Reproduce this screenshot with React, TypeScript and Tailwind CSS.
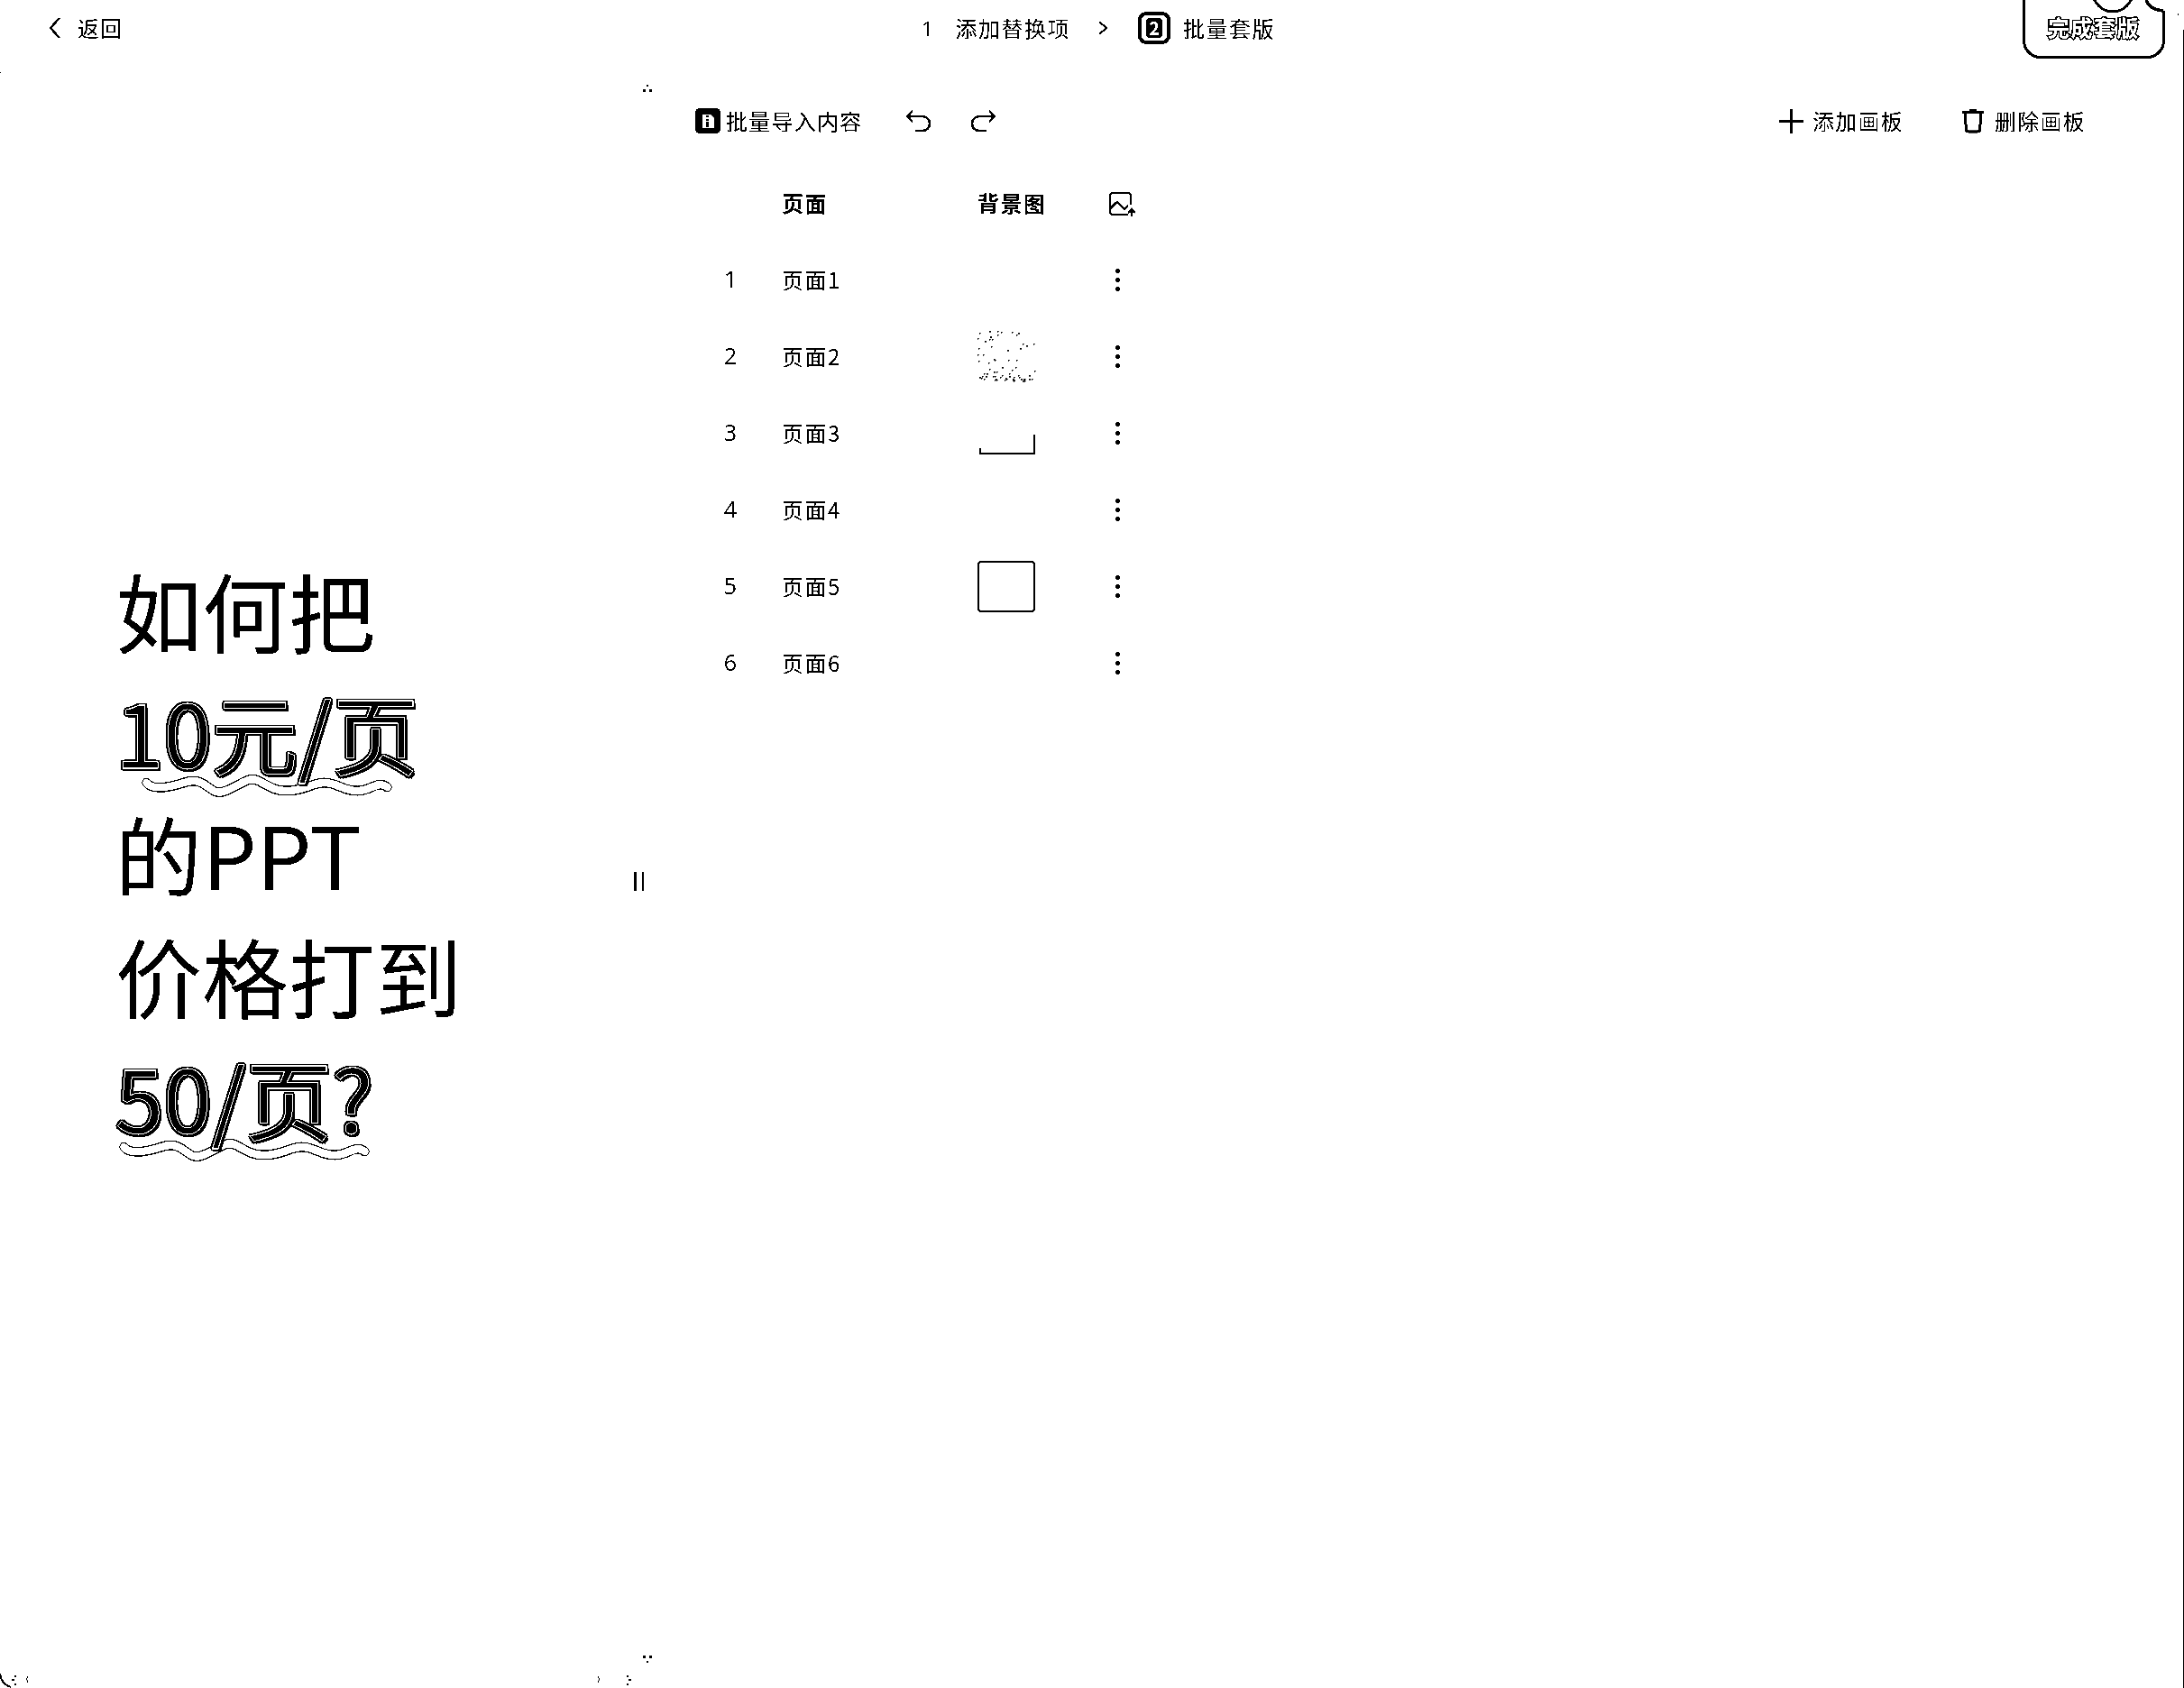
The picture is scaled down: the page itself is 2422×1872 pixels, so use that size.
import React from 'react'

const pages = [1, 2, 3, 4, 5, 6]

// scattered dots of the second page's background thumbnail
const speckles: [number, number][] = []
let seed = 17
for (let i = 0; i < 70; i++) {
  seed = (seed * 137 + 59) % 1009
  const x = seed % 64
  seed = (seed * 137 + 59) % 1009
  const y = i % 3 === 0 ? 50 + (seed % 6) : seed % 56
  speckles.push([x, y])
}

const WAVE =
  'M7 9 C14 17 32 15 52 9 S76 12 88 18 S116 10 130 6 S152 18 175 18 S204 10 220 9 S244 19 262 18 S284 6 297 14'

const Wave = ({ className }: { className: string }) => (
  <svg className={className} width="280" height="30" viewBox="0 0 304 30" preserveAspectRatio="none" fill="none">
    <path d={WAVE} stroke="#000" strokeWidth="11" strokeLinecap="round" />
    <path d={WAVE} stroke="#fff" strokeWidth="8.5" strokeLinecap="round" />
  </svg>
)

const Loud = ({ children }: { children: React.ReactNode }) => (
  <span className="relative z-10 text-black [-webkit-text-stroke:0.9px_#fff] [text-shadow:2.5px_0_0_#000,-2.5px_0_0_#000,0_2.5px_0_#000,0_-2.5px_0_#000,2px_2px_0_#000,-2px_-2px_0_#000,2px_-2px_0_#000,-2px_2px_0_#000,3px_3px_0_#000]">
    {children}
  </span>
)

const Kebab = () => (
  <div className="ml-[8px] flex w-[5px] flex-col gap-[5px]">
    <span className="h-[5px] w-[5px] rounded-full bg-black" />
    <span className="h-[5px] w-[5px] rounded-full bg-black" />
    <span className="h-[5px] w-[5px] rounded-full bg-black" />
  </div>
)

const Thumb = ({ page }: { page: number }) => {
  if (page === 2) {
    return (
      <svg width="66" height="57" viewBox="0 0 66 57">
        {speckles.map(([x, y], i) => (
          <rect key={i} x={x} y={y} width={i % 4 === 0 ? 2 : 1.5} height="1.5" fill="#000" />
        ))}
      </svg>
    )
  }
  if (page === 3) {
    return (
      <svg width="66" height="57" viewBox="0 0 66 57" className="mt-[60px]" fill="none" stroke="#000">
        <path d="M3 15v6h60" strokeWidth="1.6" />
        <path d="M63 22V0" strokeWidth="1.6" />
      </svg>
    )
  }
  if (page === 5) {
    return <div className="h-[57px] w-[64px] rounded-[4px] border-2 border-black" />
  }
  return null
}

export default function App() {
  return (
    <div className="relative h-[1872px] w-[2422px] overflow-hidden bg-white font-['Noto_Sans_CJK_SC','Noto_Sans',sans-serif] text-[24px] text-black contrast-[100]">
      <header className="flex h-[62px] items-center pl-[54px]">
        <div className="flex items-center">
          <svg width="13" height="24" viewBox="0 0 13 24" fill="none" stroke="#000" strokeWidth="2.4">
            <path d="M12 1 2 12l10 11" />
          </svg>
          <span className="ml-[19px] tracking-[1px]">返回</span>
        </div>

        <div className="ml-[886px] flex items-center">
          <span className="font-['Open_Sans',sans-serif] text-[22px]">1</span>
          <span className="ml-[25px] tracking-[1.5px]">添加替换项</span>
          <svg className="ml-[30px]" width="13" height="16" viewBox="0 0 13 16" fill="none" stroke="#000" strokeWidth="2">
            <path d="m2 1 8 7-8 7" />
          </svg>
          <div className="ml-[32px] flex h-[36px] w-[36px] items-center justify-center rounded-[9px] border-[4px] border-black">
            <span className="flex h-[22px] w-[18px] items-center justify-center rounded-[4px] bg-black text-[20px] leading-none font-bold text-white">
              2
            </span>
          </div>
          <span className="ml-[14px] tracking-[1.5px]">批量套版</span>
        </div>

        <button className="relative mr-[21px] -mt-[20px] ml-auto flex h-[85px] w-[158px] items-end justify-center self-start rounded-b-[20px] border-[3.5px] border-t-0 border-black pb-[14px]">
          <span className="font-bold tracking-[1.5px] text-white [-webkit-text-stroke:3px_#000] [paint-order:stroke_fill]">
            完成套版
          </span>
          <svg className="absolute -right-[5px] top-0 overflow-visible" width="75" height="40" viewBox="0 0 75 40" fill="none">
            <path d="M52 0h23v32H68Q56 31 52 20Z" fill="#fff" />
            <path d="M52 20Q56 31 71 32" stroke="#000" strokeWidth="3.5" />
            <circle cx="15" cy="11" r="22" stroke="#000" strokeWidth="3" />
          </svg>
        </button>
      </header>

      <main className="flex">
        <section className="w-[717px] pt-[546px] pl-[128px] text-[96px] leading-[135px]">
          <div>如何把</div>
          <div className="relative">
            <Wave className="absolute left-[28px] top-[116px]" />
            <Loud>10元/页</Loud>
          </div>
          <div>的PPT</div>
          <div>价格打到</div>
          <div className="relative">
            <Wave className="absolute left-[3px] top-[115px]" />
            <Loud>50/页?</Loud>
          </div>
        </section>

        <section className="flex-1 pt-[42px] pl-[54px] pr-[109px]">
          <div className="flex h-[60px] items-center">
            <svg width="28" height="28" viewBox="0 0 28 28">
              <rect width="28" height="28" rx="5" fill="#000" />
              <path d="M8 7h9l4 4v11H8z" fill="#fff" />
              <path d="M12 8h3v2h-3zm0 4h3v2h-3zm0 3h3v6h-3z" fill="#000" />
            </svg>
            <span className="ml-[6px] tracking-[1.25px]">批量导入内容</span>
            <svg className="ml-[47px]" width="28" height="25" viewBox="0 0 28 25" fill="none" stroke="#000" strokeWidth="2.6">
              <path d="M8 1 2 7l6 6M2 7h17a8 8 0 0 1 0 16h-8" />
            </svg>
            <svg className="ml-[45px]" width="28" height="25" viewBox="0 0 28 25" fill="none" stroke="#000" strokeWidth="2.6">
              <path d="m20 1 6 6-6 6m6-6H9a8 8 0 0 0 0 16h8" />
            </svg>
            <svg className="ml-auto" width="27" height="27" viewBox="0 0 27 27" fill="none" stroke="#000" strokeWidth="3">
              <path d="M0 13.5h27M13.5 0v27" />
            </svg>
            <span className="ml-[10px] tracking-[1.25px]">添加画板</span>
            <svg className="ml-[64px]" width="26" height="28" viewBox="0 0 26 28" fill="none" stroke="#000" strokeWidth="3">
              <path d="M1 4.5h24M4 5l1.5 19a2.5 2.5 0 0 0 2.5 2h10a2.5 2.5 0 0 0 2.5-2L22 5M9 2.5h8" />
            </svg>
            <span className="ml-[11px] tracking-[1.25px]">删除画板</span>
          </div>

          <div className="mt-[19px] grid grid-cols-[96px_217px_145px_1fr] auto-rows-[85px] items-center">
            <span />
            <span className="-mt-[2px] font-bold tracking-[1.5px]">页面</span>
            <span className="-mt-[2px] font-bold tracking-[1.5px]">背景图</span>
            <svg width="31" height="28" viewBox="0 0 31 28" fill="none" stroke="#000" strokeWidth="2.6">
              <path d="M25 15V5a3 3 0 0 0-3-3H5a3 3 0 0 0-3 3v18a3 3 0 0 0 3 3h17" />
              <path d="m2 19 8-7 8 8 4-4" />
              <path d="M26 28v-8m-4 4 4-4 4 4" strokeWidth="2.8" />
            </svg>
            {pages.map((page) => (
              <React.Fragment key={page}>
                <span className="-mt-[2px] pr-[18px] text-center font-['Open_Sans',sans-serif] text-[25px]">{page}</span>
                <span className="-mt-[2px] tracking-[1.5px]">页面{page}</span>
                <div className="flex h-[57px] items-center">
                  <Thumb page={page} />
                </div>
                <Kebab />
              </React.Fragment>
            ))}
          </div>
        </section>
      </main>

      {/* resize grip */}
      <div className="absolute left-[703px] top-[967px] flex h-[21px] gap-[6px]">
        <span className="w-[3px] bg-black" />
        <span className="w-[2px] bg-black" />
      </div>

      {/* scrollbar leftovers */}
      <svg className="absolute left-[712px] top-[94px]" width="12" height="8" viewBox="0 0 12 8" fill="#000">
        <rect x="5" y="0" width="2" height="2" />
        <rect x="1" y="5" width="3" height="3" />
        <rect x="8" y="5" width="3" height="3" />
      </svg>
      <svg className="absolute left-[712px] top-[1836px]" width="12" height="8" viewBox="0 0 12 8" fill="#000">
        <rect x="1" y="0" width="3" height="3" />
        <rect x="8" y="0" width="3" height="3" />
        <rect x="5" y="6" width="2" height="2" />
      </svg>
      <svg className="absolute bottom-0 left-0" width="40" height="16" viewBox="0 0 40 16" fill="none" stroke="#000">
        <path d="M0 0q1 11 12 15" strokeWidth="2" />
        <path d="M17 2v2M13 7h3M17 11v2" strokeWidth="2" />
        <path d="M31 3q-3 3 0 7" strokeWidth="1" />
      </svg>
      <svg className="absolute bottom-0 left-[660px]" width="48" height="16" viewBox="0 0 48 16" fill="none" stroke="#000">
        <path d="M3 3q3 3 0 7" strokeWidth="1" />
        <path d="M36 2v2M40 7h-3M36 11v2" strokeWidth="2" />
      </svg>

      <span className="absolute left-0 top-[80px] h-px w-px bg-black" />
      <span className="absolute left-[2415px] top-[15px] h-[2px] w-px bg-black" />
      <span className="absolute bottom-0 right-0 top-[33px] w-px bg-black" />
    </div>
  )
}
